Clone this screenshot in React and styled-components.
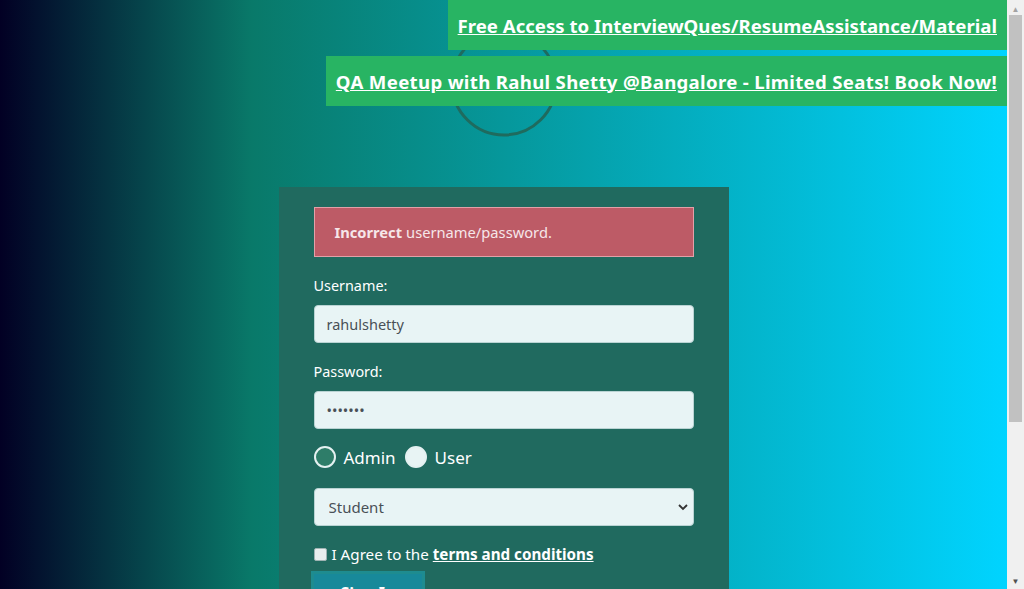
import React from 'react'
import styled, { createGlobalStyle } from 'styled-components'

const GlobalStyle = createGlobalStyle`
    html, body {
        margin: 0;
        padding: 0;
    }
    body {
        font-family: 'Noto Sans', 'Open Sans', sans-serif;
        color: #ffffff;
        background: #f0f0f0;
    }
`

const StyledPage = styled.div`
    position: relative;
    width: 1007px;
    padding: 29px 0 169px;
    min-height: 605px;
    background: linear-gradient(90deg, #020024 0%, #097969 25%, #00d4ff 100%);
`

const StyledScrollbar = styled.div`
    position: fixed;
    top: 0;
    right: 0;
    width: 17px;
    height: 100vh;
    background: #f0f0f0;
    display: flex;
    flex-direction: column;
    align-items: center;
`

const StyledScrollArrow = styled.div`
    height: 17px;
    display: flex;
    align-items: center;
    justify-content: center;
    color: ${props => (props.dark ? '#505050' : '#a3a3a3')};
    font-size: 8px;
`

const StyledScrollThumb = styled.div`
    width: 13px;
    height: 407px;
    margin-top: -2px;
    background: #c1c1c1;
`

const StyledScrollSpace = styled.div`
    flex: 1;
`

const StyledLogo = styled.div`
    display: flex;
    justify-content: center;
    margin-bottom: 50px;
`

const StyledBanner = styled.div`
    position: absolute;
    right: 0;
    top: ${props => props.top}px;
    height: 50px;
    display: flex;
    align-items: center;
    padding: 0 10px;
    background: #28b463;
`

const StyledBannerLink = styled.a`
    color: #ffffff;
    font-weight: 700;
    font-size: 18.6px;
    letter-spacing: ${props => props.spacing || 0}px;
    text-decoration: underline;
    white-space: nowrap;
`

const StyledLoginBox = styled.div`
    width: 450px;
    margin: 0 auto;
    box-sizing: border-box;
    padding: 20px 35px;
    background: #206a5f;
`

const StyledAlert = styled.div`
    height: 50px;
    box-sizing: border-box;
    display: flex;
    align-items: center;
    padding: 0 20px;
    margin-bottom: 17px;
    background: #bd5b66;
    border: 1px solid #e3a0a8;
    color: #f6e6e9;
    font-size: 14.7px;

    strong {
        font-weight: 700;
        margin-right: 4px;
    }
`

const StyledGroup = styled.div`
    margin-bottom: ${props => props.gap}px;
`

const StyledLabel = styled.label`
    display: block;
    font-size: 14.4px;
    line-height: 24px;
    margin-bottom: 7px;
`

const StyledInput = styled.input`
    display: block;
    width: 100%;
    height: 38px;
    box-sizing: border-box;
    padding: 0 12px;
    border: 1px solid #b9d3d3;
    border-radius: 4px;
    background: #e8f4f5;
    color: #495057;
    font-family: inherit;
    font-size: 14.5px;
    outline: none;
`

const StyledRadioRow = styled.div`
    display: flex;
    align-items: center;
    height: 24px;
    margin: 16px 0 19px;
`

const StyledRadio = styled.span`
    width: 22px;
    height: 22px;
    box-sizing: border-box;
    border-radius: 50%;
    border: 2px solid #e4f1f1;
    background: ${props => (props.checked ? '#2e7d69' : '#e8f4f4')};
    margin-right: 8px;
`

const StyledRadioText = styled.span`
    font-size: 17px;
    margin-right: 9px;
`

const StyledSelectWrap = styled.div`
    position: relative;
`

const StyledSelect = styled.select`
    display: block;
    width: 100%;
    height: 38px;
    box-sizing: border-box;
    padding: 0 14px;
    border: 1px solid #b9d3d3;
    border-radius: 4px;
    background: #e8f4f5;
    color: #495057;
    font-family: inherit;
    font-size: 15px;
    appearance: none;
    outline: none;
`

const StyledChevron = styled.svg`
    position: absolute;
    right: 6px;
    top: 15px;
    pointer-events: none;
`

const StyledCheckRow = styled.div`
    display: flex;
    align-items: center;
    height: 24px;
    margin-top: 16px;
    font-size: 15.2px;

    a {
        color: #ffffff;
        font-weight: 700;
        text-decoration: underline;
        margin-left: 4px;
    }
`

const StyledCheckbox = styled.span`
    width: 13px;
    height: 13px;
    box-sizing: border-box;
    border-radius: 2px;
    border: 1px solid #9fb3b3;
    background: #e9eeee;
    margin-right: 5px;
`

const StyledButton = styled.button`
    margin-top: 8px;
    padding: 7px 27px 10px;
    border: none;
    background: #18899a;
    box-shadow: 0 0 0 3px #1e8c90;
    color: #ffffff;
    font-family: inherit;
    font-weight: 700;
    font-size: 16px;
    line-height: 24px;
`

class App extends React.Component {
    render() {
        return (
            <StyledPage>
                <GlobalStyle />
                <StyledBanner top={0}>
                    <StyledBannerLink href="#">Free Access to InterviewQues/ResumeAssistance/Material</StyledBannerLink>
                </StyledBanner>
                <StyledBanner top={56}>
                    <StyledBannerLink href="#" spacing={0.33}>QA Meetup with Rahul Shetty @Bangalore - Limited Seats! Book Now!</StyledBannerLink>
                </StyledBanner>
                <StyledLogo>
                    <svg width="108" height="108" viewBox="0 0 108 108">
                        <circle cx="54" cy="54" r="52" fill="none" stroke="#1f6b5e" strokeWidth="3" />
                    </svg>
                </StyledLogo>
                <StyledLoginBox>
                    <StyledAlert>
                        <strong>Incorrect</strong> username/password.
                    </StyledAlert>
                    <StyledGroup gap={17}>
                        <StyledLabel>Username:</StyledLabel>
                        <StyledInput defaultValue="rahulshetty" />
                    </StyledGroup>
                    <StyledGroup gap={0}>
                        <StyledLabel>Password:</StyledLabel>
                        <StyledInput type="password" defaultValue="learnin" />
                    </StyledGroup>
                    <StyledRadioRow>
                        <StyledRadio checked />
                        <StyledRadioText>Admin</StyledRadioText>
                        <StyledRadio />
                        <StyledRadioText>User</StyledRadioText>
                    </StyledRadioRow>
                    <StyledSelectWrap>
                        <StyledSelect defaultValue="stud">
                            <option value="stud">Student</option>
                            <option value="teach">Teacher</option>
                            <option value="consult">Consultant</option>
                        </StyledSelect>
                        <StyledChevron width="10" height="8" viewBox="0 0 10 8">
                            <path d="M1 2 L5 6 L9 2" fill="none" stroke="#333" strokeWidth="1.8" />
                        </StyledChevron>
                    </StyledSelectWrap>
                    <StyledCheckRow>
                        <StyledCheckbox />
                        I Agree to the <a href="#">terms and conditions</a>
                    </StyledCheckRow>
                    <StyledButton>Sign In</StyledButton>
                </StyledLoginBox>
                <StyledScrollbar>
                    <StyledScrollArrow>▲</StyledScrollArrow>
                    <StyledScrollThumb />
                    <StyledScrollSpace />
                    <StyledScrollArrow dark>▼</StyledScrollArrow>
                </StyledScrollbar>
            </StyledPage>
        )
    }
}

export default App
